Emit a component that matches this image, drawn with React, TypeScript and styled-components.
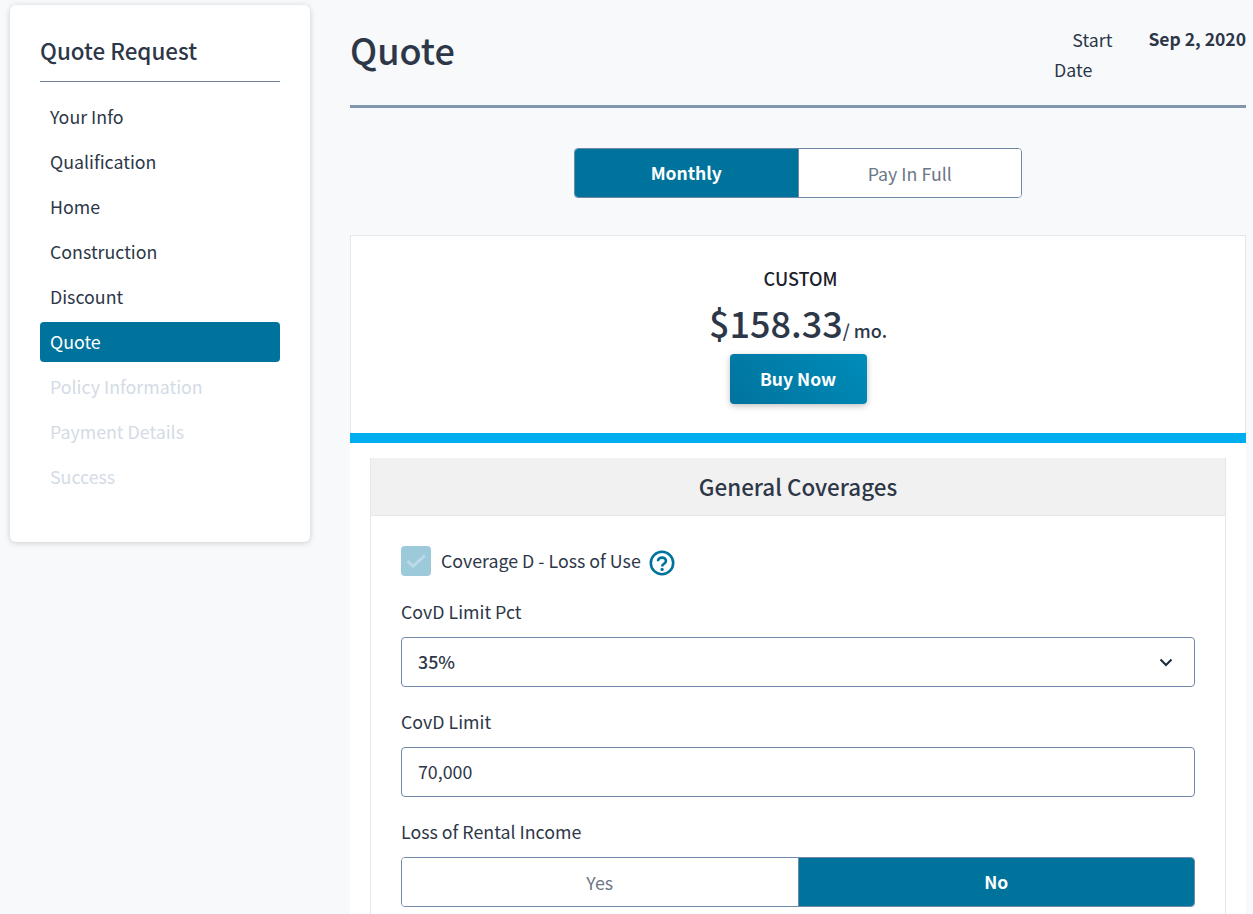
import * as React from "react";
import styled, { createGlobalStyle } from "styled-components";

const GlobalStyle = createGlobalStyle`
  html, body {
    margin: 0;
    height: 100%;
    overflow: hidden;
    background: #f7f9fb;
  }
  body {
    font-family: "Noto Sans CJK SC", "Noto Sans", sans-serif;
    color: #2d3748;
  }
  * {
    box-sizing: border-box;
  }
`;

const Page = styled.div`
  display: flex;
  align-items: flex-start;
  gap: 40px;
  padding: 5px 7px 0 10px;
  height: 914px;
  overflow: hidden;
`;

const Sidebar = styled.aside`
  flex: 0 0 300px;
  height: 537px;
  padding: 30px;
  background: white;
  border-radius: 6px;
  box-shadow: 0 1px 6px 0 rgba(0, 0, 0, 0.18);
`;

const SidebarTitle = styled.h2`
  margin: 0;
  height: 47px;
  font-size: 22.4px;
  line-height: 30px;
  font-weight: 500;
  border-bottom: 1px solid #718096;
`;

const NavList = styled.nav`
  display: flex;
  flex-direction: column;
  gap: 5px;
  margin-top: 15px;
`;

const NavItem = styled.div<{ $active?: boolean; $disabled?: boolean }>`
  height: 40px;
  padding: 0 10px;
  border-radius: 4px;
  font-size: 17.8px;
  line-height: 38px;
  background: ${(p) => (p.$active ? "#00739d" : "transparent")};
  color: ${(p) => (p.$active ? "white" : p.$disabled ? "#d3dbe6" : "#2d3748")};
`;

const Main = styled.main`
  flex: 1;
  min-width: 0;
`;

const Header = styled.header`
  display: flex;
  justify-content: space-between;
  height: 103px;
  border-bottom: 3px solid #8296ad;
`;

const Title = styled.h1`
  margin: 0;
  padding-top: 19px;
  font-size: 36px;
  line-height: 50px;
  font-weight: 500;
`;

const StartDate = styled.div`
  display: flex;
  gap: 36px;
  padding-top: 19px;
  font-size: 17.8px;
  line-height: 30px;
`;

const StartLabel = styled.div`
  width: 60px;
  text-align: right;
  white-space: nowrap;
`;

const StartLine = styled.div<{ $shift?: number }>`
  margin-right: ${(p) => p.$shift ?? 0}px;
`;

const StartValue = styled.div`
  font-size: 17.5px;
  font-weight: 700;
`;

const ToggleRow = styled.div<{ $width?: string; $mt: number }>`
  display: flex;
  width: ${(p) => p.$width ?? "100%"};
  height: 50px;
  margin: ${(p) => p.$mt}px auto 0;
  border: 1px solid #7188a8;
  border-radius: 4px;
  overflow: hidden;
  background: white;
`;

const ToggleOption = styled.div<{ $on?: boolean }>`
  flex: 1;
  text-align: center;
  font-size: ${(p) => (p.$on ? "17.5px" : "17.8px")};
  line-height: 48px;
  font-weight: ${(p) => (p.$on ? 700 : 400)};
  background: ${(p) => (p.$on ? "#00739d" : "white")};
  color: ${(p) => (p.$on ? "white" : "#6b7785")};
  & + & {
    border-left: 1px solid #7188a8;
  }
`;

const PriceCard = styled.section`
  display: flex;
  flex-direction: column;
  align-items: center;
  height: 198px;
  margin-top: 37px;
  padding-top: 29px;
  background: white;
  border: 1px solid #e4e7eb;
  border-bottom: none;
`;

const PlanName = styled.div`
  padding-left: 5px;
  font-size: 18px;
  line-height: 26px;
  font-weight: 500;
  color: #1a202c;
`;

const Price = styled.div`
  margin-top: 7px;
  font-size: 36px;
  line-height: 48px;
  font-weight: 500;
`;

const PriceUnit = styled.span`
  font-size: 18px;
  font-weight: 500;
`;

const BuyButton = styled.button`
  width: 137px;
  height: 50px;
  margin-top: 0;
  padding: 0 0 2px;
  border: none;
  border-radius: 4px;
  background: linear-gradient(45deg, #00739d, #008cba);
  box-shadow: 0 2px 6px rgba(0, 0, 0, 0.25);
  color: white;
  font-family: inherit;
  font-size: 17.5px;
  font-weight: 700;
`;

const Accent = styled.div`
  height: 10px;
  background: #00adef;
`;

const Body = styled.div`
  padding: 15px 20px 0;
  background: white;
`;

const CoveragePanel = styled.section`
  border: 1px solid #e4e7eb;
  border-top: none;
`;

const PanelHeader = styled.div`
  height: 58px;
  background: #f1f1f1;
  border-bottom: 1px solid #e4e7eb;
  text-align: center;
  font-size: 22.4px;
  line-height: 56px;
  font-weight: 500;
`;

const PanelBody = styled.div`
  display: flex;
  flex-direction: column;
  padding: 30px 30px 40px;
`;

const CheckRow = styled.div`
  display: flex;
  align-items: center;
  height: 30px;
  margin-bottom: 1px;
  font-size: 17.8px;
  line-height: 28px;
`;

const CheckBox = styled.div`
  flex: 0 0 30px;
  height: 30px;
  margin-right: 10px;
  border-radius: 4px;
  background: #9ccadb;
`;

const CheckMark = styled.svg`
  display: block;
  width: 30px;
  height: 30px;
`;

const CheckLabel = styled.span`
  margin-top: -2px;
`;

const HelpIcon = styled.svg`
  width: 28px;
  height: 28px;
  margin-left: 7px;
  margin-top: 4px;
`;

const FieldLabel = styled.div`
  margin-top: 20px;
  font-size: 17.8px;
  line-height: 28px;
  height: 30px;
`;

const Field = styled.div`
  display: flex;
  align-items: center;
  justify-content: space-between;
  height: 50px;
  margin-top: 10px;
  padding: 0 20px 2px 16px;
  background: white;
  border: 1px solid #7188a8;
  border-radius: 4px;
  font-size: 17.8px;
`;

const FieldValue = styled.span<{ $strong?: boolean }>`
  font-weight: ${(p) => (p.$strong ? 500 : 400)};
`;

const Chevron = styled.svg`
  width: 16px;
  height: 16px;
  margin-top: 2px;
`;

const navItems = [
  { label: "Your Info" },
  { label: "Qualification" },
  { label: "Home" },
  { label: "Construction" },
  { label: "Discount" },
  { label: "Quote", active: true },
  { label: "Policy Information", disabled: true },
  { label: "Payment Details", disabled: true },
  { label: "Success", disabled: true },
];

export default function App() {
  return (
    <Page>
      <GlobalStyle />
      <Sidebar>
        <SidebarTitle>Quote Request</SidebarTitle>
        <NavList>
          {navItems.map((item) => (
            <NavItem key={item.label} $active={item.active} $disabled={item.disabled}>
              {item.label}
            </NavItem>
          ))}
        </NavList>
      </Sidebar>
      <Main>
        <Header>
          <Title>Quote</Title>
          <StartDate>
            <StartLabel>
              <StartLine>Start</StartLine>
              <StartLine $shift={20}>Date</StartLine>
            </StartLabel>
            <StartValue>Sep 2, 2020</StartValue>
          </StartDate>
        </Header>
        <ToggleRow $width="448px" $mt={40}>
          <ToggleOption $on>Monthly</ToggleOption>
          <ToggleOption>Pay In Full</ToggleOption>
        </ToggleRow>
        <PriceCard>
          <PlanName>CUSTOM</PlanName>
          <Price>
            $158.33<PriceUnit>/ mo.</PriceUnit>
          </Price>
          <BuyButton>Buy Now</BuyButton>
        </PriceCard>
        <Accent />
        <Body>
          <CoveragePanel>
            <PanelHeader>General Coverages</PanelHeader>
            <PanelBody>
              <CheckRow>
                <CheckBox>
                  <CheckMark viewBox="0 0 30 30" fill="none">
                    <path d="M6.5 15 L12 20.2 L24 9.5" stroke="#b9dae6" strokeWidth="3" />
                  </CheckMark>
                </CheckBox>
                <CheckLabel>Coverage D - Loss of Use</CheckLabel>
                <HelpIcon viewBox="0 0 28 28" fill="none">
                  <circle cx="14" cy="14" r="11.2" stroke="#00739d" strokeWidth="2.6" />
                  <path
                    d="M10 12.2 C10 10 11.8 8.6 14 8.6 C16.3 8.6 18 10 18 12 C18 14.6 14.1 14.8 14.1 17.4"
                    stroke="#00739d"
                    strokeWidth="2.6"
                  />
                  <circle cx="14.1" cy="20.4" r="1.6" fill="#00739d" />
                </HelpIcon>
              </CheckRow>
              <FieldLabel>CovD Limit Pct</FieldLabel>
              <Field>
                <FieldValue $strong>35%</FieldValue>
                <Chevron viewBox="0 0 16 16" fill="none">
                  <path d="M2.5 5.5 L8 11 L13.5 5.5" stroke="#1a2b3c" strokeWidth="2" />
                </Chevron>
              </Field>
              <FieldLabel>CovD Limit</FieldLabel>
              <Field>
                <FieldValue>70,000</FieldValue>
              </Field>
              <FieldLabel>Loss of Rental Income</FieldLabel>
              <ToggleRow $mt={10}>
                <ToggleOption>Yes</ToggleOption>
                <ToggleOption $on>No</ToggleOption>
              </ToggleRow>
            </PanelBody>
          </CoveragePanel>
        </Body>
      </Main>
    </Page>
  );
}
